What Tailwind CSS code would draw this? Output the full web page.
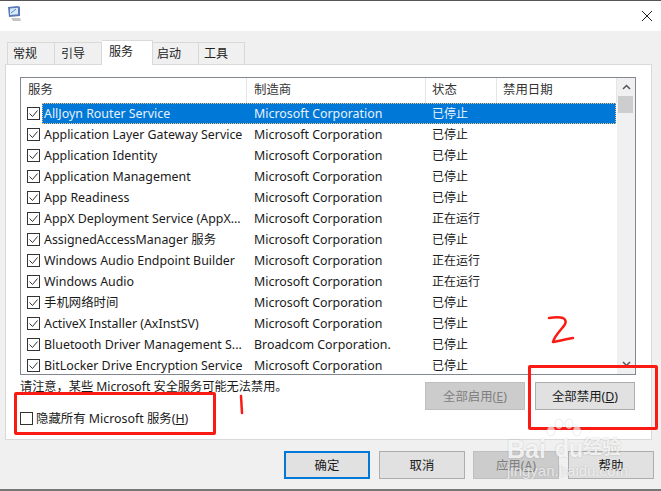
<!DOCTYPE html>
<html><head><meta charset="utf-8"><script src="https://cdn.jsdelivr.net/npm/@tailwindcss/browser@4"></script></head>
<body class="m-0 overflow-hidden bg-white">
<div class="relative w-[661px] h-[491px] overflow-hidden flex flex-col text-[12.4px] leading-[17px] text-[#1a1a1a] font-['Noto_Sans','Noto_Sans_CJK_SC',sans-serif]">
  <div class="h-px bg-[#555] shrink-0"></div>
  <div class="h-[30px] shrink-0 bg-white flex items-center justify-between pl-[7px] pr-[7px]">
    <svg width="15" height="18" viewBox="0 0 15 18" class="mb-[5px]"><path d="M1 2l10-1 2 1v9l-11 1z" fill="#5b78b8"/><path d="M3 3.5l8-.7v6.5l-8 .7z" fill="#dbe8f8"/><path d="M4 8l5-4" stroke="#3a8fd0" stroke-width="1"/><path d="M4 13h9l1 3H6z" fill="#c5c5c5"/></svg>
    <svg width="12" height="12" viewBox="0 0 12 12" class="mr-[1px]"><path d="M1 1l10 10M11 1L1 11" stroke="#222" stroke-width="1" fill="none"/></svg>
  </div>
  <div class="flex-1 bg-[#f0f0f0] flex flex-col px-[5px] pt-[9px]">
    <div class="flex items-end h-[24px] pl-[2px] relative z-10 text-[#222] text-[12px]">
      <div class="w-[48px] h-[22px] pl-[5px] border border-[#d9d9d9] border-b-0 flex items-center">常规</div>
      <div class="w-[47px] h-[22px] pl-[6px] border border-[#d9d9d9] border-b-0 border-l-0 flex items-center">引导</div>
      <div class="w-[51px] h-[25px] mb-[-1px] pb-[3px] pl-[7px] bg-white border border-[#d9d9d9] border-b-0 border-l-0 flex items-center">服务</div>
      <div class="w-[46px] h-[22px] pl-[4px] border border-[#d9d9d9] border-b-0 border-l-0 flex items-center">启动</div>
      <div class="w-[46px] h-[22px] pl-[5px] border border-[#d9d9d9] border-b-0 border-l-0 flex items-center">工具</div>
    </div>
    <div class="w-[647px] h-[376px] bg-white border border-[#d9d9d9] pl-[14px] pt-[12px] flex flex-col">
      <div class="w-[616px] h-[298px] border border-[#828790] flex overflow-hidden">
        <div class="w-[596px] flex flex-col overflow-hidden">
          <div class="h-[25px] shrink-0 flex text-[#333]">
            <div class="w-[226px] pl-[7px] pt-[3px] border-r border-[#e5e5e5]">服务</div>
            <div class="w-[179px] pl-[7px] pt-[3px] border-r border-[#e5e5e5]">制造商</div>
            <div class="w-[71px] pl-[6px] pt-[3px] border-r border-[#e5e5e5]">状态</div>
            <div class="w-[120px] pl-[6px] pt-[3px] border-r border-[#e5e5e5]">禁用日期</div>
          </div>
          <div class="h-[21px] shrink-0 flex items-center relative">
            <div class="absolute left-[21px] top-0 w-[574px] h-[21px] bg-[#0078d7] border border-dotted border-[#f0c080]"></div>
            <div class="relative w-[226px] flex items-center pl-[6px] gap-[4px] text-[#e8f2fc]"><span class="w-[13px] h-[13px] shrink-0 bg-white border border-[#333] flex items-center justify-center"><svg width="11" height="11" viewBox="0 0 11 11"><path d="M1.5 5.5l3 3 5-6" stroke="#333" fill="none"/></svg></span><span class="whitespace-nowrap">AllJoyn Router Service</span></div>
            <div class="relative w-[179px] pl-[7px] text-[#e8f2fc]">Microsoft Corporation</div>
            <div class="relative pl-[6px] text-[#e8f2fc] text-[12px]">已停止</div>
          </div>
          <div class="h-[21px] shrink-0 flex items-center"><div class="w-[226px] flex items-center pl-[6px] gap-[4px]"><span class="w-[13px] h-[13px] shrink-0 bg-white border border-[#333] flex items-center justify-center"><svg width="11" height="11" viewBox="0 0 11 11"><path d="M1.5 5.5l3 3 5-6" stroke="#333" fill="none"/></svg></span><span class="whitespace-nowrap">Application Layer Gateway Service</span></div><div class="w-[179px] pl-[7px]">Microsoft Corporation</div><div class="pl-[6px] text-[12px]">已停止</div></div>
          <div class="h-[21px] shrink-0 flex items-center"><div class="w-[226px] flex items-center pl-[6px] gap-[4px]"><span class="w-[13px] h-[13px] shrink-0 bg-white border border-[#333] flex items-center justify-center"><svg width="11" height="11" viewBox="0 0 11 11"><path d="M1.5 5.5l3 3 5-6" stroke="#333" fill="none"/></svg></span><span class="whitespace-nowrap">Application Identity</span></div><div class="w-[179px] pl-[7px]">Microsoft Corporation</div><div class="pl-[6px] text-[12px]">已停止</div></div>
          <div class="h-[21px] shrink-0 flex items-center"><div class="w-[226px] flex items-center pl-[6px] gap-[4px]"><span class="w-[13px] h-[13px] shrink-0 bg-white border border-[#333] flex items-center justify-center"><svg width="11" height="11" viewBox="0 0 11 11"><path d="M1.5 5.5l3 3 5-6" stroke="#333" fill="none"/></svg></span><span class="whitespace-nowrap">Application Management</span></div><div class="w-[179px] pl-[7px]">Microsoft Corporation</div><div class="pl-[6px] text-[12px]">已停止</div></div>
          <div class="h-[21px] shrink-0 flex items-center"><div class="w-[226px] flex items-center pl-[6px] gap-[4px]"><span class="w-[13px] h-[13px] shrink-0 bg-white border border-[#333] flex items-center justify-center"><svg width="11" height="11" viewBox="0 0 11 11"><path d="M1.5 5.5l3 3 5-6" stroke="#333" fill="none"/></svg></span><span class="whitespace-nowrap">App Readiness</span></div><div class="w-[179px] pl-[7px]">Microsoft Corporation</div><div class="pl-[6px] text-[12px]">已停止</div></div>
          <div class="h-[21px] shrink-0 flex items-center"><div class="w-[226px] flex items-center pl-[6px] gap-[4px]"><span class="w-[13px] h-[13px] shrink-0 bg-white border border-[#333] flex items-center justify-center"><svg width="11" height="11" viewBox="0 0 11 11"><path d="M1.5 5.5l3 3 5-6" stroke="#333" fill="none"/></svg></span><span class="whitespace-nowrap">AppX Deployment Service (AppX...</span></div><div class="w-[179px] pl-[7px]">Microsoft Corporation</div><div class="pl-[6px] text-[12px]">正在运行</div></div>
          <div class="h-[21px] shrink-0 flex items-center"><div class="w-[226px] flex items-center pl-[6px] gap-[4px]"><span class="w-[13px] h-[13px] shrink-0 bg-white border border-[#333] flex items-center justify-center"><svg width="11" height="11" viewBox="0 0 11 11"><path d="M1.5 5.5l3 3 5-6" stroke="#333" fill="none"/></svg></span><span class="whitespace-nowrap">AssignedAccessManager 服务</span></div><div class="w-[179px] pl-[7px]">Microsoft Corporation</div><div class="pl-[6px] text-[12px]">已停止</div></div>
          <div class="h-[21px] shrink-0 flex items-center"><div class="w-[226px] flex items-center pl-[6px] gap-[4px]"><span class="w-[13px] h-[13px] shrink-0 bg-white border border-[#333] flex items-center justify-center"><svg width="11" height="11" viewBox="0 0 11 11"><path d="M1.5 5.5l3 3 5-6" stroke="#333" fill="none"/></svg></span><span class="whitespace-nowrap">Windows Audio Endpoint Builder</span></div><div class="w-[179px] pl-[7px]">Microsoft Corporation</div><div class="pl-[6px] text-[12px]">正在运行</div></div>
          <div class="h-[21px] shrink-0 flex items-center"><div class="w-[226px] flex items-center pl-[6px] gap-[4px]"><span class="w-[13px] h-[13px] shrink-0 bg-white border border-[#333] flex items-center justify-center"><svg width="11" height="11" viewBox="0 0 11 11"><path d="M1.5 5.5l3 3 5-6" stroke="#333" fill="none"/></svg></span><span class="whitespace-nowrap">Windows Audio</span></div><div class="w-[179px] pl-[7px]">Microsoft Corporation</div><div class="pl-[6px] text-[12px]">正在运行</div></div>
          <div class="h-[21px] shrink-0 flex items-center"><div class="w-[226px] flex items-center pl-[6px] gap-[4px]"><span class="w-[13px] h-[13px] shrink-0 bg-white border border-[#333] flex items-center justify-center"><svg width="11" height="11" viewBox="0 0 11 11"><path d="M1.5 5.5l3 3 5-6" stroke="#333" fill="none"/></svg></span><span class="whitespace-nowrap">手机网络时间</span></div><div class="w-[179px] pl-[7px]">Microsoft Corporation</div><div class="pl-[6px] text-[12px]">已停止</div></div>
          <div class="h-[21px] shrink-0 flex items-center"><div class="w-[226px] flex items-center pl-[6px] gap-[4px]"><span class="w-[13px] h-[13px] shrink-0 bg-white border border-[#333] flex items-center justify-center"><svg width="11" height="11" viewBox="0 0 11 11"><path d="M1.5 5.5l3 3 5-6" stroke="#333" fill="none"/></svg></span><span class="whitespace-nowrap">ActiveX Installer (AxInstSV)</span></div><div class="w-[179px] pl-[7px]">Microsoft Corporation</div><div class="pl-[6px] text-[12px]">已停止</div></div>
          <div class="h-[21px] shrink-0 flex items-center"><div class="w-[226px] flex items-center pl-[6px] gap-[4px]"><span class="w-[13px] h-[13px] shrink-0 bg-white border border-[#333] flex items-center justify-center"><svg width="11" height="11" viewBox="0 0 11 11"><path d="M1.5 5.5l3 3 5-6" stroke="#333" fill="none"/></svg></span><span class="whitespace-nowrap">Bluetooth Driver Management S...</span></div><div class="w-[179px] pl-[7px]">Broadcom Corporation.</div><div class="pl-[6px] text-[12px]">已停止</div></div>
          <div class="h-[21px] shrink-0 flex items-center"><div class="w-[226px] flex items-center pl-[6px] gap-[4px]"><span class="w-[13px] h-[13px] shrink-0 bg-white border border-[#333] flex items-center justify-center"><svg width="11" height="11" viewBox="0 0 11 11"><path d="M1.5 5.5l3 3 5-6" stroke="#333" fill="none"/></svg></span><span class="whitespace-nowrap">BitLocker Drive Encryption Service</span></div><div class="w-[179px] pl-[7px]">Microsoft Corporation</div><div class="pl-[6px] text-[12px]">已停止</div></div>
        </div>
        <div class="w-[18px] bg-[#f0f0f0] flex flex-col items-center justify-between relative">
          <div class="w-full h-[18px] flex items-center justify-center"><svg width="9" height="6" viewBox="0 0 9 6"><path d="M1 5l3.5-3.5L8 5" stroke="#555" stroke-width="1.5" fill="none"/></svg></div>
          <div class="absolute left-[1px] top-[18px] w-[15px] h-[17px] bg-[#cdcdcd]"></div>
          <div class="w-full h-[18px] pb-[3px] flex items-center justify-center"><svg width="9" height="6" viewBox="0 0 9 6"><path d="M1 1l3.5 3.5L8 1" stroke="#555" stroke-width="1.5" fill="none"/></svg></div>
        </div>
      </div>
      <div class="flex justify-between w-[616px] relative">
        <div class="flex flex-col">
          <div class="h-[17px] mt-[3px] text-[12.2px]">请注意，某些 Microsoft 安全服务可能无法禁用。</div>
          <div class="flex items-center gap-[3px] mt-[15px]"><span class="w-[13px] h-[13px] bg-white border border-[#333]"></span><span>隐藏所有 Microsoft 服务(<u>H</u>)</span></div>
        </div>
        <div class="flex gap-[10px] mt-[7px] pr-[1px]">
          <div class="w-[100px] h-[28px] bg-[#cccccc] border border-[#bfbfbf] text-[#808080] flex items-center justify-center">全部启用(<u>E</u>)</div>
          <div class="w-[100px] h-[28px] bg-[#e1e1e1] border border-[#adadad] flex items-center justify-center">全部禁用(<u>D</u>)</div>
        </div>
      </div>
    </div>
    <div class="flex justify-end mt-[11px] pr-[2px]">
      <div class="w-[86px] h-[28px] bg-[#e1e1e1] border-2 border-[#0078d7] flex items-center justify-center">确定</div>
      <div class="w-[86px] h-[28px] ml-[9px] bg-[#e1e1e1] border border-[#adadad] flex items-center justify-center">取消</div>
      <div class="w-[86px] h-[28px] ml-[8px] bg-[#cccccc] border border-[#bfbfbf] text-[#808080] flex items-center justify-center">应用(<u>A</u>)</div>
      <div class="w-[86px] h-[28px] ml-[9px] bg-[#e1e1e1] border border-[#adadad] flex items-center justify-center">帮助</div>
    </div>
  </div>
  <div class="h-[2px] shrink-0 bg-[#777]"></div>

  <div class="absolute left-[14px] top-[392px] w-[202px] h-[43px] border-[3px] border-[#fa1c14] rounded-[2px]"></div>
  <div class="absolute left-[528px] top-[365px] w-[130px] h-[65px] border-[3px] border-[#fa1c14] rounded-[2px]"></div>
  <svg class="absolute left-[545px] top-[312px]" width="40" height="40" viewBox="0 0 40 40"><path d="M4 6C10 5 15 5 18 6C22 8 21 12 18 15C14 20 9 25 8 30C14 29 22 27 28 26" stroke="#fa1c14" stroke-width="2.5" fill="none" stroke-linecap="round" stroke-linejoin="round"/></svg>
  <svg class="absolute left-[235px] top-[390px]" width="12" height="26" viewBox="0 0 12 26"><path d="M6 6L7 23" stroke="#fa1c14" stroke-width="2.5" fill="none" stroke-linecap="round"/></svg>

  <div class="absolute left-[507px] top-[434px] text-white/80 font-['Liberation_Sans',sans-serif] font-bold text-[25px] leading-[30px] whitespace-nowrap [text-shadow:0_0_2px_#0003]">Bai</div>
  <div class="absolute left-[555px] top-[436px] text-white/80 font-['Liberation_Sans',sans-serif] font-bold text-[23px] leading-[26px] whitespace-nowrap [text-shadow:0_0_2px_#0003]">du</div>
  <div class="absolute left-[583px] top-[435px] text-white/75 font-bold text-[19px] leading-[24px] whitespace-nowrap [text-shadow:0_0_2px_#0003]">经验</div>
  <div class="absolute left-[507px] top-[462px] text-white/70 font-['Liberation_Sans',sans-serif] text-[15px] leading-[18px] whitespace-nowrap [text-shadow:0_0_2px_#0003]">jingyan.baidu.com</div>
  <svg class="absolute left-[545px] top-[418px]" width="38" height="34" viewBox="0 0 38 34" fill="#fff" fill-opacity=".65" stroke="#000" stroke-opacity=".08"><ellipse cx="6" cy="13" rx="4" ry="5"/><ellipse cx="14" cy="6" rx="4" ry="5"/><ellipse cx="24" cy="6" rx="4" ry="5"/><ellipse cx="32" cy="13" rx="4" ry="5"/></svg>
</div>
</body></html>
